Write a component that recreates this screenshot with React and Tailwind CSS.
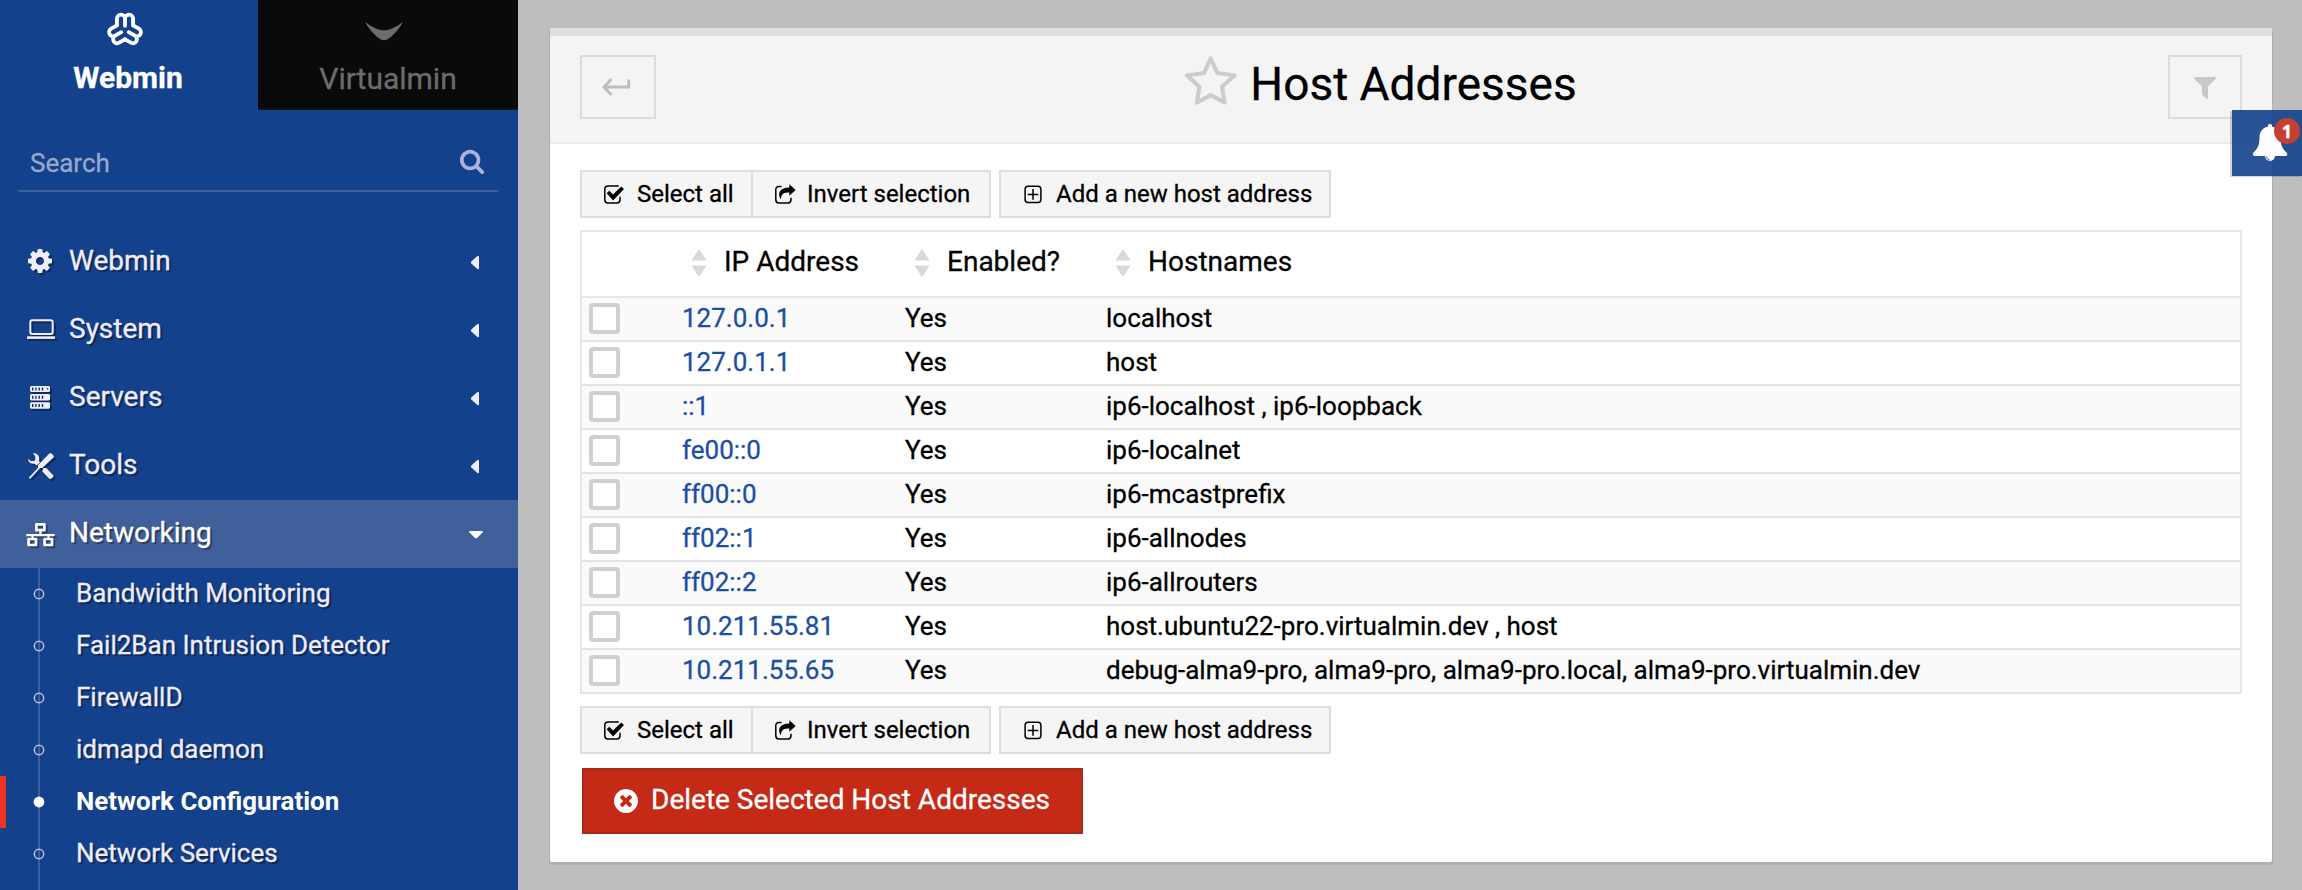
const GEAR =
  "M1152 896q0-106-75-181t-181-75-181 75-75 181 75 181 181 75 181-75 75-181zm512-109v222q0 12-8 23t-20 13l-185 28q-19 54-39 91 35 50 107 138 10 12 10 25t-9 23q-27 37-99 108t-94 71q-12 0-26-9l-138-108q-44 23-91 38-16 136-29 186-7 28-36 28h-222q-14 0-24.5-8.5t-11.5-21.5l-28-184q-49-16-90-37l-141 107q-10 9-25 9-14 0-25-11-126-114-165-168-7-10-7-23 0-12 8-23 15-21 51-66.5t54-70.5q-27-50-41-99l-183-27q-13-2-21-12.5t-8-23.5v-222q0-12 8-23t19-13l186-28q14-46 39-92-40-57-107-138-10-12-10-24 0-10 9-23 26-36 98.5-107.5t94.5-71.5q13 0 26 10l138 107q44-23 91-38 16-136 29-186 7-28 36-28h222q14 0 24.5 8.5t11.5 21.5l28 184q49 16 90 37l142-107q9-9 24-9 13 0 25 10 129 119 165 170 7 8 7 22 0 12-8 23-15 21-51 66.5t-54 70.5q26 50 41 98l183 28q13 2 21 12.5t8 23.5z";
const SEARCH =
  "M1216 832q0-185-131.5-316.5t-316.5-131.5-316.5 131.5-131.5 316.5 131.5 316.5 316.5 131.5 316.5-131.5 131.5-316.5zm512 832q0 52-38 90t-90 38q-54 0-90-38l-343-342q-179 124-399 124-143 0-273.5-55.5t-225-150-150-225-55.5-273.5 55.5-273.5 150-225 225-150 273.5-55.5 273.5 55.5 225 150 150 225 55.5 273.5q0 220-124 399l343 343q37 37 37 90z";
const FILTER =
  "M1595 295q17 41-14 70l-493 493v742q0 42-39 59-13 5-25 5-27 0-45-19l-256-256q-19-19-19-45v-486l-493-493q-31-29-14-70 17-39 59-39h1280q42 0 59 39z";
const TIMES =
  "M1277 1122q0-26-19-45l-181-181 181-181q19-19 19-45 0-27-19-46l-90-90q-19-19-46-19-26 0-45 19l-181 181-181-181q-19-19-45-19-27 0-46 19l-90 90q-19 19-19 46 0 26 19 45l181 181-181 181q-19 19-19 45 0 27 19 46l90 90q19 19 46 19 26 0 45-19l181-181 181 181q19 19 45 19 27 0 46-19l90-90q19-19 19-46zm387-226q0 209-103 385.5t-279.5 279.5-385.5 103-385.5-103-279.5-279.5-103-385.5 103-385.5 279.5-279.5 385.5-103 385.5 103 279.5 279.5 103 385.5z";

function Glyph({ d, className }) {
  return (
    <svg viewBox="0 0 1792 1792" className={className} fill="currentColor">
      <path d={d} />
    </svg>
  );
}

const menuIcons = {
  Webmin: (
    <g transform="translate(2 1) scale(0.015625)">
      <path d={GEAR} />
    </g>
  ),
  System: (
    <>
      <rect x="6.3" y="6.3" width="22.4" height="13.6" rx="2" fill="none" stroke="currentColor" strokeWidth="2" />
      <rect x="3" y="22.3" width="28" height="2.6" />
    </>
  ),
  Servers: (
    <path
      fillRule="evenodd"
      d="M7 4h18l1 1v4l-1 1H7l-1-1V5zM8 5.6v3h1.4v-3zm3.2 0v3h1.3v-3zm3.3 0v3h1.4v-3zm3.3 0v3h1.4v-3zm5 .4v1.4h1.4V6zM7 12h18l1 1v4.4l-1 1H7l-1-1V13zm1 1.8v3h1.4v-3zm3.2 0v3h1.3v-3zm3.3 0v3h1.4v-3zm3.3 0v3h1.4v-3zM7 20.2h18l1 1v4.6l-1 1H7l-1-1v-4.6zm1 1.8v3h1.4v-3zm3.2 0v3h1.3v-3zm3.3 0v3h1.4v-3zm3.3 0v3h1.4v-3z"
    />
  ),
  Tools: (
    <>
      <path d="M25.6 3.2h1.6l2.6 2.6v1.5L18.2 18.1l-2.1-.2-9.4 10.4L5 28.8l.2-1.6 9-9.7-.3-2.3z" />
      <path d="M9.2 3.4c3.4-.5 6.2 2.2 6 5.4l-.2 2.2 1.2 1.2-3.6 3.4-2-1.9c-3.5.6-6.5-1.6-6.5-5l2.6 2.2h3.4l1.2-1.2V6.4z" />
      <path d="M19.4 18.1l2.8-.2 6.8 7c.6.8.6 1.5 0 2.2l-1.4 1.5c-.8.7-1.8.6-2.5-.1l-6.9-7.2z" />
    </>
  ),
  Networking: (
    <>
      <g fill="none" stroke="currentColor" strokeWidth="2.7" strokeLinejoin="round">
        <rect x="12.4" y="6.4" width="8" height="5.8" />
        <rect x="4.6" y="21" width="7.4" height="6" />
        <rect x="20.6" y="21" width="7.4" height="6" />
      </g>
      <path d="M2.3 16h28.4v2.200H2.3zM15.3 13h2.3v4h-2.3zM7.4 17h2v3h-2zM23.4 17h2v3h-2z" />
    </>
  ),
};

function MenuItem({ label, open }) {
  return (
    <li
      className={
        "flex h-[68px] items-center pl-6 text-[28px] [text-shadow:2px_2px_1px_rgba(0,0,0,0.4)] " +
        (open ? "bg-[#3f609b] text-white" : "text-[#f0ecfb]")
      }
    >
      <svg viewBox="0 0 32 32" className="h-8 w-8 drop-shadow-[2px_2px_0.5px_rgba(0,0,0,0.35)]" fill="currentColor">
        {menuIcons[label]}
      </svg>
      <span className="ml-[13px] flex-1 pb-[2px]">{label}</span>
      <svg viewBox="0 0 16 16" className="mr-[34px] h-4 w-4" fill="currentColor">
        {open ? (
          <path d="M1.8 5h12.4q1.2.5.4 1.6L9 12.1q-1 .7-2 0L1.4 6.6Q.6 5.500 1.800 5z" />
        ) : (
          <path d="M11 2.400v12.200q-.5 1.200-1.600.4L3.300 9.500q-.7-1 0-2L9.400 2q1.100-.800 1.600.400z" />
        )}
      </svg>
    </li>
  );
}

function SubItem({ label, active }) {
  return (
    <li
      className={
        "relative flex h-[52px] items-center pl-[33px] " +
        (active
          ? "text-[25.900px] font-bold text-white [-webkit-text-stroke:0]"
          : "text-[26px] text-[#f0ecfb] [text-shadow:2px_2px_1px_rgba(0,0,0,0.4)]")
      }
    >
      {active && <span className="absolute top-0 left-0 h-full w-[6px] bg-[#ee3322]" />}
      <svg viewBox="0 0 12 12" className="h-3 w-3">
        {active ? (
          <circle cx="6" cy="6" r="5.4" fill="#fff" />
        ) : (
          <circle cx="6" cy="6" r="4.700" fill="none" stroke="#b9c4df" strokeWidth="1.500" />
        )}
      </svg>
      <span className="ml-[31px] pb-px whitespace-nowrap">{label}</span>
    </li>
  );
}

function CheckIcon() {
  return (
    <svg viewBox="0 0 24 24" className="h-6 w-6">
      <path
        d="M16.700 4.100H6q-3.200 0-3.200 3.200v10.400q0 3.200 3.200 3.200h8.800q3.200 0 3.200-3.200v-3"
        fill="none"
        stroke="#000"
        strokeWidth="1.500"
      />
      <path d="M4.700 11.300l2.500-2.600 3.900 3.900 8.100-8.200 2.800 2.500-10.900 11.600z" />
    </svg>
  );
}

function InvertIcon() {
  return (
    <svg viewBox="0 0 24 24" className="h-6 w-6">
      <path
        d="M8.500 4.500H6q-3.200 0-3.200 3.200v10q0 3.200 3.200 3.200h8.800q3.200 0 3.200-3.200v-2"
        fill="none"
        stroke="#000"
        strokeWidth="1.500"
      />
      <path d="M16.300 2.300l6.400 5.800-6.400 5.700v-3.300c-5 0-7.800.6-8.600 6.900-3.300-5.500-1.900-11.600 8.600-11.900z" />
    </svg>
  );
}

function PlusIcon() {
  return (
    <svg viewBox="0 0 24 24" className="h-6 w-6" fill="none" stroke="#000" strokeWidth="1.500">
      <rect x="3.100" y="4.200" width="15.800" height="16.400" rx="3" />
      <path d="M5.700 12.400h10.600M11 7.100v10.600" />
    </svg>
  );
}

const btn = "flex h-12 items-center border-2 border-[#dedede] bg-[#f5f5f5] text-[24px] text-black";

function Toolbar() {
  return (
    <div className="flex gap-2">
      <div className="flex">
        <div className={btn + " w-[173px] pl-[20px]"}>
          <CheckIcon />
          <span className="ml-[11px] pb-px whitespace-nowrap">Select all</span>
        </div>
        <div className={btn + " -ml-[2px] w-[240px] pl-[20px]"}>
          <InvertIcon />
          <span className="ml-[10px] pb-px whitespace-nowrap">Invert selection</span>
        </div>
      </div>
      <div className={btn + " w-[332px] pl-[21px]"}>
        <PlusIcon />
        <span className="ml-[10px] pb-px whitespace-nowrap">Add a new host address</span>
      </div>
    </div>
  );
}

function HeadCell({ label }) {
  return (
    <div className="flex items-center pl-[10px]">
      <svg viewBox="0 0 14 28" className="mb-[2px] h-7 w-[14px]" fill="#d9d9d9">
        <path d="M7 0l7 10.500v1H0v-1zM7 28l7-10.500v-1H0v1z" />
      </svg>
      <span className="ml-[18px] pb-[5px] text-[28px]">{label}</span>
    </div>
  );
}

const rows = [
  ["127.0.0.1", "localhost"],
  ["127.0.1.1", "host"],
  ["::1", "ip6-localhost , ip6-loopback"],
  ["fe00::0", "ip6-localnet"],
  ["ff00::0", "ip6-mcastprefix"],
  ["ff02::1", "ip6-allnodes"],
  ["ff02::2", "ip6-allrouters"],
  ["10.211.55.81", "host.ubuntu22-pro.virtualmin.dev , host"],
  ["10.211.55.65", "debug-alma9-pro, alma9-pro, alma9-pro.local, alma9-pro.virtualmin.dev"],
];

const cols = "grid grid-cols-[100px_223px_201px_1fr] items-center";

function Sidebar() {
  return (
    <aside className="h-full w-[518px] shrink-0 overflow-hidden bg-[#13418b]">
      <div className="flex h-[110px]">
        <div className="flex w-[258px] flex-col items-center pr-[2px] text-white">
          <svg viewBox="-20 -20 40 40" className="mt-[10px] ml-[-6px] h-10 w-10 shrink-0">
            <g transform="scale(0.95)" fill="none" stroke="#fff" strokeWidth="4" strokeLinecap="round" strokeLinejoin="round">
              {[0, 120, 240].map((a) => (
                <path
                  key={a}
                  transform={`rotate(${a})`}
                  d="M-8.500-4.900V-12A4.250 4.250 0 0 1 0-12A4.250 4.250 0 0 1 8.500-12V-4.900M0-12V-4.500"
                />
              ))}
            </g>
          </svg>
          <span className="mt-[10px] text-[30px] leading-9 font-bold">Webmin</span>
        </div>
        <div className="flex flex-1 flex-col items-center border-b-2 border-[#15130f] bg-[#0a0a0a] text-[#6c6c6c]">
          <svg viewBox="0 0 40 40" className="mt-[10px] ml-[-8px] h-10 w-10 shrink-0" fill="#6c6c6c">
            <path d="M1 12C8 17 14 20.300 20 20.300S32 17 39 12C34 21 25 30.300 20 30.300S6 21 1 12z" />
          </svg>
          <span className="mt-[11px] text-[30px] leading-9">Virtualmin</span>
        </div>
      </div>
      <div className="mx-[18px] mr-5 flex h-[82px] items-center justify-between border-b-2 border-[#3d5f9d] pr-[13px] pl-3 pt-[26px]">
        <span className="text-[26px] text-[#98a8cd]">Search</span>
        <Glyph d={SEARCH} className="mb-[5px] h-[26px] w-[26px] text-[#a9b3dd]" />
      </div>
      <ul className="mt-9">
        <MenuItem label="Webmin" />
        <MenuItem label="System" />
        <MenuItem label="Servers" />
        <MenuItem label="Tools" />
        <MenuItem label="Networking" open />
      </ul>
      <ul className="relative h-[322px]">
        <li className="absolute top-0 left-[38px] h-full w-[2px] bg-[#3d5f9d]" />
        <SubItem label="Bandwidth Monitoring" />
        <SubItem label="Fail2Ban Intrusion Detector" />
        <SubItem label="FirewallD" />
        <SubItem label="idmapd daemon" />
        <SubItem label="Network Configuration" active />
        <SubItem label="Network Services" />
      </ul>
    </aside>
  );
}

export default function App() {
  return (
    <div className="relative flex h-[890px] w-[2302px] overflow-hidden bg-[#bebebe] font-['Roboto',sans-serif] [-webkit-text-stroke:0.3px]">
      <Sidebar />
      <main className="flex-1 pt-7 pr-[30px] pl-8">
        <div className="h-[834px] rounded-[2px] bg-white shadow-[0_2px_0_1px_rgba(0,0,0,0.07)]">
          <header className="h-[116px] border-t-8 border-b-2 border-t-[#dfdfdf] border-b-[#ebebeb] bg-[#f4f4f4]">
            <div className="flex items-start justify-between px-[30px] pt-[19px]">
              <div className="flex h-16 w-[76px] items-center justify-center border-2 border-[#dcdcdc]">
                <svg viewBox="0 0 30 20" className="ml-[-4px] h-5 w-[30px]" fill="none" stroke="#bdbdbd" strokeWidth="2.800">
                  <path d="M10.500 2L3 10l7.500 8M3.500 10H27.700V2.500" />
                </svg>
              </div>
              <div className="mr-[63px] flex h-[58px]">
                <svg viewBox="0 0 54 52" className="mt-[-1px] h-[52px] w-[54px]" fill="none" stroke="#cccccc" strokeWidth="4.200" strokeLinejoin="round">
                  <path d="M26.700 4.500L33.300 19l17.200 2.500L38 32.700l2.500 15.800-13.800-7.300-13.800 7.300 2.500-15.800L2.900 21.500 20.100 19z" />
                </svg>
                <h1 className="ml-[12px] text-[46px] leading-[58px] whitespace-nowrap text-black">Host Addresses</h1>
              </div>
              <div className="flex h-16 w-[74px] items-center justify-center border-2 border-[#dcdcdc]">
                <Glyph d={FILTER} className="h-7 w-7 text-[#c8c8c8]" />
              </div>
            </div>
          </header>
          <div className="px-[30px] pt-[26px] text-black">
            <Toolbar />
            <div className="mt-3 border-2 border-b-0 border-[#e6e6e6]">
              <div className={cols + " h-[66px] border-b-2 border-[#e6e6e6]"}>
                <span />
                <HeadCell label="IP Address" />
                <HeadCell label="Enabled?" />
                <HeadCell label="Hostnames" />
              </div>
              {rows.map(([ip, names]) => (
                <div key={ip} className={cols + " h-11 border-b-2 border-[#e3e3e3] text-[26px] odd:bg-white even:bg-[#fafafa]"}>
                  <span className="mb-px ml-[7px] h-[31px] w-[31px] rounded-[4px] border-4 border-[#d0d0d0] bg-white" />
                  <span className="pb-px text-[#1c4fa3]">{ip}</span>
                  <span className="pb-px">Yes</span>
                  <span className="pb-px whitespace-nowrap">{names}</span>
                </div>
              ))}
            </div>
            <div className="mt-3">
              <Toolbar />
            </div>
            <div className="mt-[14px] ml-[2px] flex h-[66px] w-[501px] items-center border-2 border-[#a82a1c] bg-[#c42a16] pl-7 text-[28px] text-white">
              <Glyph d={TIMES} className="h-7 w-7" />
              <span className="ml-[11px] pb-[2px] whitespace-nowrap">Delete Selected Host Addresses</span>
            </div>
          </div>
        </div>
      </main>
      <div className="absolute top-[110px] right-0 h-[66px] w-[70px] bg-[#13418b]/90 shadow-[-2px_1px_0_rgba(0,0,0,0.16)]">
        <svg viewBox="0 0 36 40" className="absolute top-[14px] left-[20px] h-10 w-9" fill="#fff">
          <path d="M18 0c-1.800 0-2.300 1-2.100 2.800C9.500 4 7.500 9 7.500 14 7.500 23 4 26 1.300 28.700.200 30.500 1 32 2.500 32h31c1.800 0 2.300-1.700 1.200-3.300C32 26 28.500 23 28.500 14c0-5-2-10-8.400-11.200C20.300 1 19.800 0 18 0z" />
          <path d="M13 32h10a5 5 0 0 1-10 0z" />
          <path d="M14.300 32.500a4 4 0 0 0 3.400 3.400" fill="none" stroke="#2a5396" strokeWidth="0.900" />
        </svg>
        <span className="absolute top-[8px] right-[2px] flex h-[26px] w-[26px] items-center justify-center rounded-full bg-[#c44033] font-['Open_Sans',sans-serif] text-[18px] leading-none font-bold text-white">
          1
        </span>
      </div>
    </div>
  );
}
